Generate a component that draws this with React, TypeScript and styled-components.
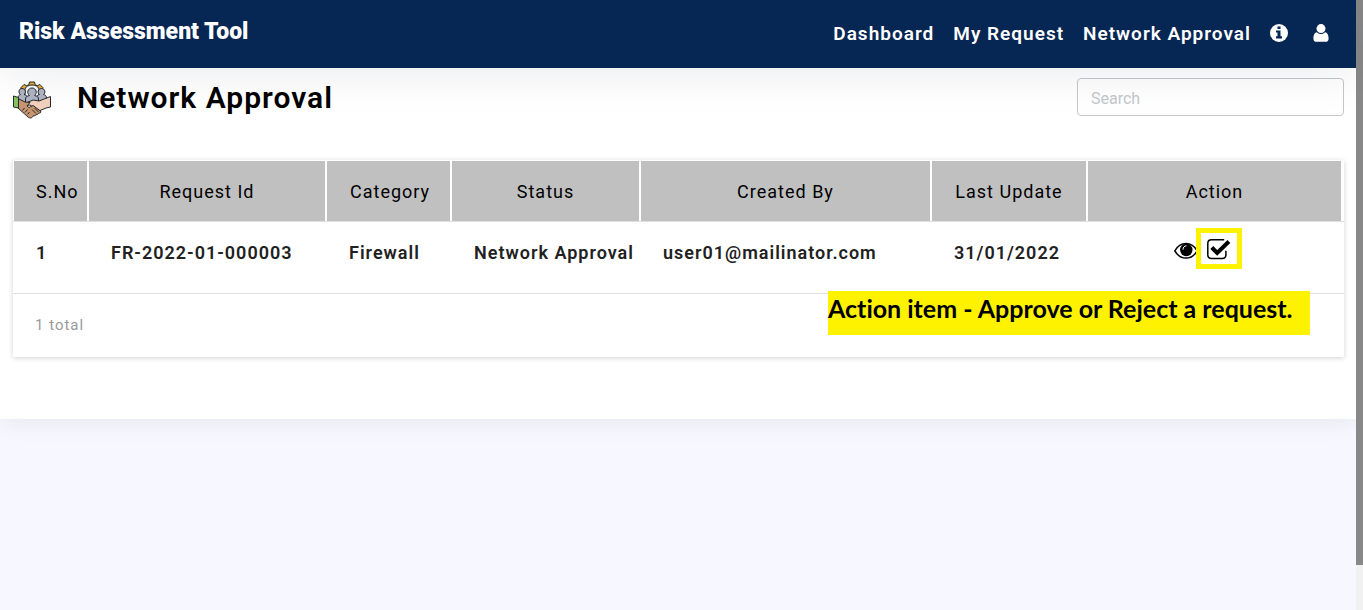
import React from 'react';
import styled, { createGlobalStyle } from 'styled-components';

const GlobalStyle = createGlobalStyle`
  * { box-sizing: border-box; }
  body {
    margin: 0;
    background: #f6f7ff;
    font-family: Roboto, "Liberation Sans", sans-serif;
    letter-spacing: 1px;
    color: #000;
  }
`;

const Shell = styled.div`
  display: flex;
  min-height: 100vh;
`;

const Page = styled.div`
  flex: 1;
  min-width: 0;
`;

const ScrollTrack = styled.div`
  display: flex;
  flex-direction: column;
  width: 7px;
  height: 100vh;
  padding-bottom: 45px;
  background: #f1f1f1;
`;

const ScrollThumb = styled.div`
  flex: 1;
  background: #888;
`;

const TopBar = styled.header`
  position: relative;
  z-index: 1;
  display: flex;
  justify-content: space-between;
  align-items: center;
  height: 68px;
  padding: 0 27px 0 19px;
  background: #062653;
  color: #fff;
  box-shadow: 0 2px 48px rgba(6, 30, 60, 0.1);
`;

const Brand = styled.a`
  padding-bottom: 4px;
  color: inherit;
  font-size: 23px;
  font-weight: 900;
  line-height: 28px;
  letter-spacing: 0;
  text-decoration: none;
`;

const Nav = styled.nav`
  display: flex;
  align-items: center;
  gap: 19px;
`;

const NavLink = styled.a`
  color: inherit;
  font-size: 19px;
  font-weight: 600;
  line-height: 24px;
  text-decoration: none;
`;

const IconButton = styled.button`
  display: flex;
  padding: 0;
  border: 0;
  background: none;
  color: inherit;
  cursor: pointer;
`;

const NavIcons = styled.div`
  display: flex;
  align-items: center;
  gap: 25px;
  padding-bottom: 2px;
`;

const Content = styled.main`
  padding: 10px 12px 62px 13px;
  background: #fff;
  box-shadow: 0 2px 24px rgba(0, 0, 0, 0.08);
`;

const TitleRow = styled.div`
  display: flex;
  justify-content: space-between;
  align-items: flex-start;
  margin-bottom: 41px;
`;

const TitleGroup = styled.div`
  display: flex;
  align-items: flex-end;
  height: 41px;
  gap: 26px;
`;

const Title = styled.h1`
  margin: 0;
  font-size: 30px;
  font-weight: 600;
  line-height: 42px;
`;

const SearchInput = styled.input`
  width: 267px;
  height: 38px;
  padding: 7px 13px 5px;
  border: 1px solid #c4c6c9;
  border-radius: 4px;
  background: transparent;
  color: #333;
  font: 16px/24px Roboto, "Liberation Sans", sans-serif;
  &::placeholder { color: #c3c7cc; }
`;

const Card = styled.section`
  background: #fff;
  box-shadow: 0 1px 5px rgba(0, 0, 0, 0.18);
`;

const Table = styled.table`
  width: 100%;
  table-layout: fixed;
  border-spacing: 0;
  font-size: 18px;
  line-height: 24px;
  white-space: nowrap;
`;

const HeadCell = styled.th`
  height: 61px;
  padding: 2px 23px 0;
  border: solid #fff;
  border-width: 1px 1px 0;
  background: #c0c0c0;
  font-weight: 400;
  text-align: center;
  &:first-child { padding-left: 22px; }
  &:last-child { border-right-width: 3px; }
`;

const Cell = styled.td`
  height: 72px;
  padding: 19px 0 0 23px;
  border-top: 1px solid #e0e0e0;
  color: #212121;
  font-weight: 600;
  vertical-align: top;
`;

const ActionCell = styled(Cell)`
  padding-top: 16px;
`;

const Actions = styled.div`
  display: flex;
  justify-content: center;
  align-items: center;
  gap: 8px;
  padding-right: 50px;
  color: #000;
`;

const Highlighted = styled.span`
  position: relative;
  display: flex;
  &::after {
    content: '';
    position: absolute;
    inset: -10px -11px -8px -10px;
    border: 5px solid #fff200;
    pointer-events: none;
  }
`;

const Footer = styled.footer`
  position: relative;
  height: 64px;
  padding: 20px 22px;
  border-top: 1px solid #e0e0e0;
  color: #999;
  font-size: 15px;
  line-height: 22px;
`;

const Callout = styled.div`
  position: absolute;
  top: -3px;
  right: 34px;
  width: 482px;
  height: 44px;
  background: #fff200;
  color: #000;
  font: 700 25px/34px Lato, "Open Sans", sans-serif;
  font-variant-ligatures: none;
  letter-spacing: 0;
  white-space: nowrap;
`;

const InfoIcon = () => (
  <svg width="18" height="18" viewBox="0 0 18 18" aria-hidden="true">
    <circle cx="9" cy="9" r="9" fill="#fff" />
    <path d="M7.500 2.600h3v2.500h-3zM6 6.400h4.500v5.900H12v2.200H6v-2.200h1.500V8.600H6z" fill="#062653" />
  </svg>
);

const UserIcon = () => (
  <svg width="16" height="18" viewBox="0 0 16 18" fill="#fff" aria-hidden="true">
    <path d="M3.900 8.200C1.200 8.700.4 11.600.4 14.400c0 2.100 1.200 3.400 3 3.400h9.200c1.800 0 3-1.300 3-3.400 0-2.800-.8-5.700-3.500-6.200C11 9.300 9.600 10 8 10S5 9.300 3.900 8.200z" />
    <circle cx="8" cy="4.600" r="4.500" />
  </svg>
);

const EyeIcon = () => (
  <svg width="24" height="18" viewBox="0 0 24 18" fill="none" aria-hidden="true">
    <path d="M.8 9.800C3.500 5.100 7.400 2.500 12 2.500s8.500 2.600 11.200 7.300c-2.700 4.700-6.600 7.300-11.200 7.300S3.500 14.500.8 9.800z" stroke="currentColor" strokeWidth="1.500" />
    <circle cx="12.300" cy="9" r="6.200" fill="currentColor" />
    <path d="M9 8.300c0-2 1.300-3.300 3.100-3.500" stroke="#fff" strokeWidth="1" strokeLinecap="round" />
  </svg>
);

const CheckIcon = () => (
  <svg width="25" height="23" viewBox="0 0 25 23" fill="none" stroke="currentColor" aria-hidden="true">
    <path d="M18.200 1.800H5.500C3.200 1.800 1.800 3.200 1.800 5.500v11.200c0 2.300 1.400 3.700 3.700 3.700h10.700c2.300 0 3.700-1.400 3.700-3.700v-4" strokeWidth="1.500" />
    <path d="M5.800 9.500l5.400 5.500L22.900 3.500" strokeWidth="4" />
  </svg>
);

const PartnersLogo = () => (
  <svg width="38" height="38" viewBox="0 0 38 38" stroke="#26292e" strokeWidth="1" strokeLinejoin="round" aria-hidden="true">
    <path d="M16.500 1h5l.7 2.700 2.100 1 2.600-1.200 3.200 3.300-1.300 2.700 1 2.500v6H8v-6l1-2.500-1.200-2.700L11 3.500l2.700 1.200 2.100-1z" fill="#e3ab32" />
    <path d="M12 8c1-3 4-4 7-4s6 1 7 4v10H12z" fill="#f4f5f7" />
    <g fill="#aeb4c1">
      <path d="M5 22v-5c0-2 1-3 2.500-3.500C5 12 5.500 7.500 9 7.500s4.500 4.500 2 6c2 .5 3.500 1.500 3.500 3.500v5z" />
      <path d="M23.500 22v-5c0-2 1-3 3-3.500-2.500-1.500-1.500-6 2-6s4.500 4.500 2 6c2 .5 3 1.500 3 3.500v5z" />
      <path d="M12.500 23v-5c0-2 1.500-3 4-3.500-3-2-2-7.500 2.500-7.500s5.500 5.500 2.500 7.500c2.500.5 4 1.500 4 3.500v5z" />
    </g>
    <path d="M37.500 15.500v10.500l-4.500 1-7 3-9-6-3 .5-1-2.500 7-3 6 1z" fill="#f3d0bd" />
    <path d="M5 17.500l7 3.500 5 .5-3 3.500 2 1.500 4-2 7.500 5.500c1 1.500-.5 2.500-2 2-.3 1.500-1.500 2-2.500 1.500-.5 1.500-2 1.500-2.500 1-1.500 3-3.500 3-5.500 1.500L5 27z" fill="#c99570" />
    <path d="M.5 15l5 1.500v10.500l-5-1z" fill="#82c45d" />
    <path d="M9.500 29.500l2-2.500M12 31.500l2.500-3M14.500 33.500l2-2.500M19 28.500l4 4M21.500 27l4 4" fill="none" />
  </svg>
);

const columns = [
  { label: 'S.No', width: 75 },
  { label: 'Request Id', width: 238 },
  { label: 'Category', width: 125 },
  { label: 'Status', width: 189 },
  { label: 'Created By', width: 291 },
  { label: 'Last Update', width: 156 },
  { label: 'Action', width: 257 },
];

const requests = [
  ['1', 'FR-2022-01-000003', 'Firewall', 'Network Approval', 'user01@mailinator.com', '31/01/2022'],
];

export default function App() {
  return (
    <>
      <GlobalStyle />
      <Shell>
        <Page>
          <TopBar>
            <Brand href="#">Risk Assessment Tool</Brand>
            <Nav>
              <NavLink href="#">Dashboard</NavLink>
              <NavLink href="#">My Request</NavLink>
              <NavLink href="#">Network Approval</NavLink>
              <NavIcons>
                <IconButton aria-label="Information"><InfoIcon /></IconButton>
                <IconButton aria-label="Account"><UserIcon /></IconButton>
              </NavIcons>
            </Nav>
          </TopBar>
          <Content>
            <TitleRow>
              <TitleGroup>
                <PartnersLogo />
                <Title>Network Approval</Title>
              </TitleGroup>
              <SearchInput type="search" placeholder="Search" aria-label="Search" />
            </TitleRow>
            <Card>
              <Table>
                <colgroup>
                  {columns.map((c) => <col key={c.label} width={c.width} />)}
                </colgroup>
                <thead>
                  <tr>{columns.map((c) => <HeadCell key={c.label} scope="col">{c.label}</HeadCell>)}</tr>
                </thead>
                <tbody>
                  {requests.map((row) => (
                    <tr key={row[1]}>
                      {row.map((value) => <Cell key={value}>{value}</Cell>)}
                      <ActionCell>
                        <Actions>
                          <IconButton aria-label="View request"><EyeIcon /></IconButton>
                          <Highlighted>
                            <IconButton aria-label="Approve or reject request"><CheckIcon /></IconButton>
                          </Highlighted>
                        </Actions>
                      </ActionCell>
                    </tr>
                  ))}
                </tbody>
              </Table>
              <Footer>
                1 total
                <Callout>Action item - Approve or Reject a request.</Callout>
              </Footer>
            </Card>
          </Content>
        </Page>
        <ScrollTrack aria-hidden="true"><ScrollThumb /></ScrollTrack>
      </Shell>
    </>
  );
}
